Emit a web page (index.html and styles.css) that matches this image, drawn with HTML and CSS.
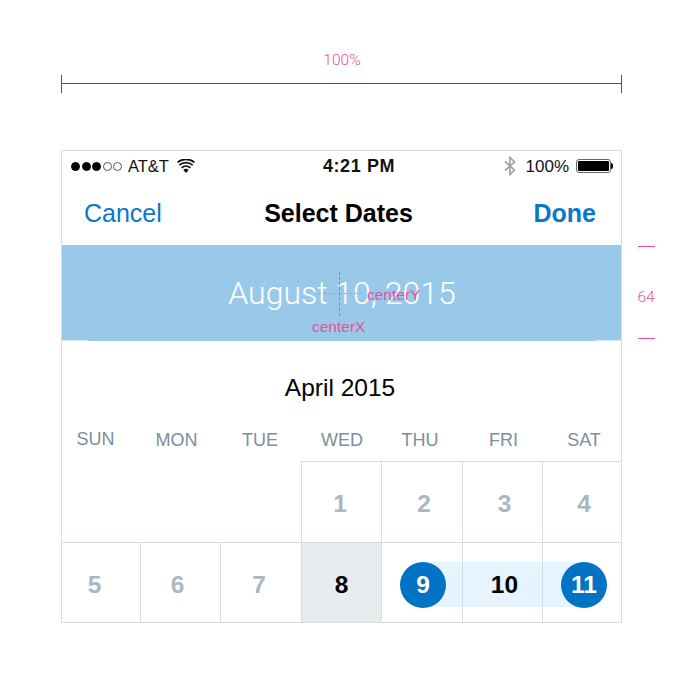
FILE: index.html
```html
<!DOCTYPE html>
<html lang="en">
<head>
<meta charset="utf-8">
<title>Select Dates</title>
<link rel="stylesheet" href="styles.css">
</head>
<body>
<div class="page">
  <div class="ruler">
    <span class="ruler-label">100%</span>
    <div class="ruler-line"></div>
  </div>
  <div class="phone">
    <div class="status">
      <div class="status-left">
        <span class="dots"><i class="dot on"></i><i class="dot on"></i><i class="dot on"></i><i class="dot"></i><i class="dot"></i></span>
        <span class="carrier">AT&amp;T</span>
        <svg class="wifi" width="18" height="14" viewBox="0 0 18 14"><path d="M9 14 6.3 10.9a4 4 0 0 1 5.4 0Z" fill="#111"/><path d="M4.6 8.9a6.6 6.6 0 0 1 8.8 0" fill="none" stroke="#111" stroke-width="1.8"/><path d="M2.3 6.2a10 10 0 0 1 13.4 0" fill="none" stroke="#111" stroke-width="1.8"/><path d="M.6 3.4a13 13 0 0 1 16.8 0" fill="none" stroke="#111" stroke-width="1.8"/></svg>
      </div>
      <div class="status-time">4:21 PM</div>
      <div class="status-right">
        <svg class="bt" width="12" height="20" viewBox="0 0 12 20"><path d="M1 5.5 10.5 14 6 18.5v-17L10.5 6 1 14.5" fill="none" stroke="#a3a3a3" stroke-width="1.7"/></svg>
        <span class="pct">100%</span>
        <span class="battery"><span class="battery-fill"></span></span>
      </div>
    </div>
    <div class="nav">
      <span class="nav-btn">Cancel</span>
      <span class="nav-title">Select Dates</span>
      <span class="nav-btn nav-done">Done</span>
    </div>
    <div class="banner">
      <span class="banner-date">August 10, 2015</span>
      <span class="cross-h"></span>
      <span class="cross-v"></span>
      <span class="center-y">centerY</span>
      <span class="center-x">centerX</span>
    </div>
    <div class="month">April 2015</div>
    <div class="weekdays">
      <span class="wd wd-sun">SUN</span><span class="wd">MON</span><span class="wd">TUE</span><span class="wd">WED</span><span class="wd">THU</span><span class="wd">FRI</span><span class="wd">SAT</span>
    </div>
    <div class="grid">
      <div class="cell blank"></div><div class="cell blank"></div><div class="cell blank edge"></div>
      <div class="cell top nudge-l3">1</div><div class="cell top nudge-r4">2</div><div class="cell top nudge-r4">3</div><div class="cell top last nudge-r4">4</div>
      <div class="cell row2 nudge-l13">5</div><div class="cell row2 nudge-l6">6</div><div class="cell row2 nudge-l4">7</div>
      <div class="cell row2 today">8</div>
      <div class="cell row2 range-start nudge-r2"><span class="pick">9</span></div>
      <div class="cell row2 range-mid nudge-r4">10</div>
      <div class="cell row2 range-end last nudge-r4"><span class="pick">11</span></div>
    </div>
  </div>
  <div class="height-mark">
    <span class="tick"></span>
    <span class="height-label">64</span>
    <span class="tick"></span>
  </div>
</div>
</body>
</html>
```
FILE: styles.css
```css
* { box-sizing: border-box; }
html, body { margin: 0; padding: 0; background: #fff; }
body { width: 700px; height: 700px; overflow: hidden; font-family: "Liberation Sans", Arial, sans-serif; }
.page { position: relative; width: 700px; height: 700px; padding: 50px 0 0 61px; }

.ruler { width: 561px; height: 100px; }
.ruler-label { display: block; text-align: center; font-family: Roboto, sans-serif; font-weight: 300; font-size: 15.5px; line-height: 20px; color: #ec4f98; padding-left: 1px; }
.ruler-line { height: 18px; margin-top: 5px; border-left: 1px solid #d4107f; border-right: 1px solid #d4107f; position: relative; }
.ruler-line::after { content: ""; position: absolute; left: 0; right: 0; top: 8px; height: 1px; background: #d4107f; }

.phone { width: 561px; height: 473px; border: 1px solid #dcdcd6; display: flex; flex-direction: column; }

.status { height: 30px; display: grid; grid-template-columns: 1fr auto 1fr; align-items: center; padding: 0 10px 0 9px; color: #111; font-size: 17px; flex: none; }
.status-left { display: flex; align-items: center; }
.dots { display: flex; gap: 1.5px; }
.dot { display: block; width: 9px; height: 9px; border-radius: 50%; border: 1px solid #555; }
.dot.on { background: #000; border-color: #000; }
.carrier { margin-left: 6px; font-size: 16.5px; padding-top: 1px; }
.wifi { margin-left: 8px; margin-top: -1px; }
.status-time { font-weight: 700; font-size: 18px; letter-spacing: .6px; margin-left: 36px; padding-top: 1px; }
.status-right { display: flex; align-items: center; justify-content: flex-end; }
.pct { margin-left: 10px; padding-top: 1px; }
.battery { width: 35px; height: 14px; margin-left: 7px; border: 1px solid #666; border-radius: 3px; padding: 1px; position: relative; display: block; }
.battery-fill { display: block; height: 100%; background: #000; border-radius: 1px; }
.battery::after { content: ""; position: absolute; right: -3px; top: 3px; width: 2px; height: 6px; background: #000; border-radius: 0 2px 2px 0; }

.nav { height: 64px; display: grid; grid-template-columns: 1fr auto 1fr; align-items: center; padding: 1px 25px 0 22px; flex: none; }
.nav-btn { font-size: 25px; color: #0a78c9; }
.nav-title { font-size: 25px; font-weight: 700; color: #000; margin-right: 3px; }
.nav-done { font-weight: 700; text-align: right; }

.banner { position: relative; height: 96px; display: flex; align-items: center; justify-content: center; flex: none;
  background:
    linear-gradient(#d3e6f4, #d3e6f4) left bottom / 26px 1px no-repeat,
    linear-gradient(#d3e6f4, #d3e6f4) right bottom / 26px 1px no-repeat,
    #99c9e9; }
.banner-date { color: #fff; font-family: Roboto, sans-serif; font-weight: 300; font-size: 32px; padding-left: 1px; }
.cross-h { position: absolute; left: 256px; top: 48px; width: 44px; border-top: 1px dashed #d88fc4; }
.cross-v { position: absolute; left: 277px; top: 27px; height: 44px; border-left: 1px dashed #b768b8; }
.center-y { position: absolute; left: 305px; top: 41px; color: #e8509a; font-size: 15.5px; line-height: 18px; }
.center-x { position: absolute; left: 250px; top: 73px; color: #e8509a; font-size: 15.5px; line-height: 18px; }

.month { height: 81px; padding-top: 30px; text-align: center; font-size: 24.5px; line-height: 34px; color: #000; margin-left: -3px; flex: none; }
.weekdays { height: 39px; display: grid; grid-template-columns: 67px 95px 72px 92px 64px 103px 58px; flex: none; }
.wd { text-align: center; font-size: 18px; line-height: 36px; color: #7d8e9a; }
.wd-sun { margin-top: -1px; }

.grid { flex: 1; display: grid; grid-template-columns: 79px 80px 81px 80px 81px 80px 78px; grid-template-rows: 81px 80px; }
.cell { display: flex; align-items: center; justify-content: center; color: #a9b8c1; font-size: 24.5px; font-weight: 700; }
.blank.edge { border-right: 1px solid #d5dde2; }
.top { border-top: 1px solid #d5dde2; border-right: 1px solid #d5dde2; padding-top: 4px; }
.row2 { border-top: 1px solid #d5dde2; border-right: 1px solid #d5dde2; padding-top: 5px; }
.last { border-right: 0; }
.today { background: #e9ecef; color: #000; }
.range-start, .range-mid, .range-end { color: #000; padding-top: 4px; }
.range-mid { background: linear-gradient(#e5f4fe, #e5f4fe) 0 19px / 100% 45px no-repeat; }
.range-start { background: linear-gradient(#e5f4fe, #e5f4fe) 100% 19px / 39px 45px no-repeat; }
.range-end { background: linear-gradient(#e5f4fe, #e5f4fe) 0 19px / 40px 45px no-repeat; }
.pick { width: 46px; height: 46px; border-radius: 50%; background: #0073c4; color: #fff; display: flex; align-items: center; justify-content: center; }

.nudge-l3 { padding-right: 3px; }
.nudge-l4 { padding-right: 4px; }
.nudge-l6 { padding-right: 6px; }
.nudge-l13 { padding-right: 13px; }
.nudge-r2 { padding-left: 2px; }
.nudge-r4 { padding-left: 4px; }

.height-mark { position: absolute; left: 637px; top: 246px; width: 18px; height: 93px; display: flex; flex-direction: column; justify-content: space-between; align-items: center; }
.tick { display: block; width: 17px; border-top: 1px solid #ec4a98; }
.height-label { color: #ec4f98; font-family: Roboto, sans-serif; font-weight: 300; font-size: 15.5px; line-height: 16px; margin-top: 8px; }
```
